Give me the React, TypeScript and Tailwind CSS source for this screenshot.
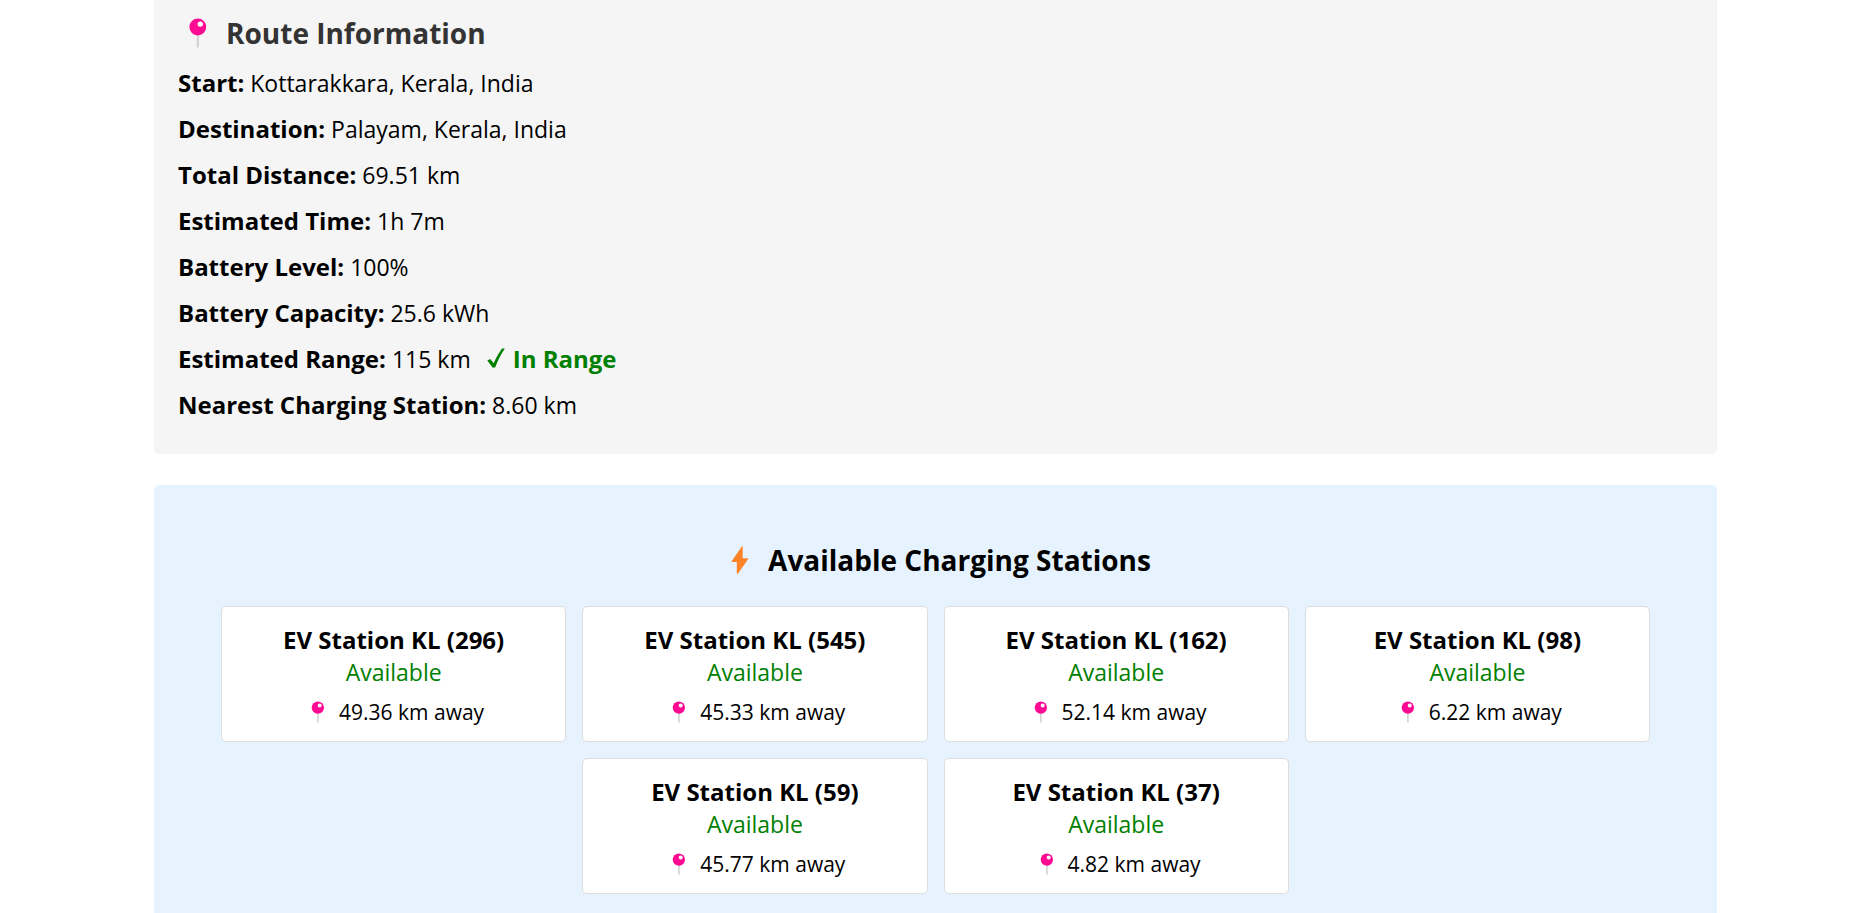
type IconProps = {
  className?: string;
};

const route = [
  { label: "Start", value: "Kottarakkara, Kerala, India" },
  { label: "Destination", value: "Palayam, Kerala, India" },
  { label: "Total Distance", value: "69.51 km" },
  { label: "Estimated Time", value: "1h 7m" },
  { label: "Battery Level", value: "100%" },
  { label: "Battery Capacity", value: "25.6 kWh" },
  { label: "Estimated Range", value: "115 km", inRange: true },
  { label: "Nearest Charging Station", value: "8.60 km" },
];

const stations = [
  { id: 296, distance: "49.36" },
  { id: 545, distance: "45.33" },
  { id: 162, distance: "52.14" },
  { id: 98, distance: "6.22" },
  { id: 59, distance: "45.77" },
  { id: 37, distance: "4.82" },
];

function PinIcon({ className }: IconProps) {
  return (
    <svg viewBox="0 0 40 30" className={className} aria-hidden="true">
      <rect x="18.7" y="15" width="2.3" height="14.4" fill="#d4d4d4" />
      <circle cx="19.8" cy="9" r="8.4" fill="#ff0a93" />
      <circle cx="22.3" cy="6.1" r="2.7" fill="#fff" />
    </svg>
  );
}

function BoltIcon({ className }: IconProps) {
  return (
    <svg viewBox="0 0 40 30" className={className} aria-hidden="true">
      <path
        d="M22 1.2 11.6 16.2c-.3.5 0 .9.5.9h4.7v11c0 .8.8 1 1.3.3l9.9-14.1c.4-.5.1-1-.5-1h-4.8V1.7c0-.7-.4-.9-.7-.5z"
        fill="#ff8429"
      />
    </svg>
  );
}

function CheckIcon({ className }: IconProps) {
  return (
    <svg viewBox="0 0 18 20" className={className} aria-hidden="true">
      <path d="M.3 12.4 3.2 10.900 6.700 15.200C9 10 11.800 5 15 .6H17.800C14.200 6.100 10.900 12.400 8.300 19.200L5.800 19.800z" fill="#008000" />
    </svg>
  );
}

export default function App() {
  return (
    <div className="flex min-h-screen flex-col bg-white pl-[154px] pr-[152px] font-['Open_Sans','Noto_Sans',sans-serif] text-black">
      {/* Route details */}
      <section className="mb-[31px] rounded-b-[5px] bg-[#f5f5f5] px-6 pt-[11px] pb-[26px]">
        <h2 className="flex items-center gap-2 text-[28px] leading-[44px] font-bold text-[#333]">
          <PinIcon className="h-[30px] w-10" />
          Route Information
        </h2>
        <div className="mt-[5px]">
          {route.map((row) => (
            <p key={row.label} className="text-[23px] leading-[46px]">
              <strong className="text-[24px] font-bold">{row.label}:</strong> {row.value}
              {row.inRange && (
                <span className="ml-4 text-[24px] font-bold text-[#008000]">
                  <CheckIcon className="mr-2 inline-block h-5 w-[18px] align-baseline" />
                  In Range
                </span>
              )}
            </p>
          ))}
        </div>
      </section>

      {/* Charging stations */}
      <section className="flex-1 rounded-t-[5px] bg-[#e6f3ff] px-[67px] pt-[53px] pb-4 text-center">
        <h2 className="flex items-center justify-center gap-2 text-[28px] leading-[44px] font-bold">
          <BoltIcon className="h-[30px] w-10" />
          Available Charging Stations
        </h2>
        <div className="mt-6 flex flex-wrap justify-center gap-4">
          {stations.map((station) => (
            <div
              key={station.id}
              className="w-[calc((100%-48px)/4)] rounded-[5px] border border-[#ddd] bg-white px-4 pt-4 pb-[11px]"
            >
              <h3 className="text-[24px] leading-[33px] font-bold">EV Station KL ({station.id})</h3>
              <p className="text-[23px] leading-[33px] text-[#008000]">Available</p>
              <p className="mt-[5px] flex items-center justify-center gap-[6px] text-[21px] leading-9">
                <PinIcon className="h-[22px] w-[30px]" />
                {station.distance} km away
              </p>
            </div>
          ))}
        </div>
      </section>
    </div>
  );
}
